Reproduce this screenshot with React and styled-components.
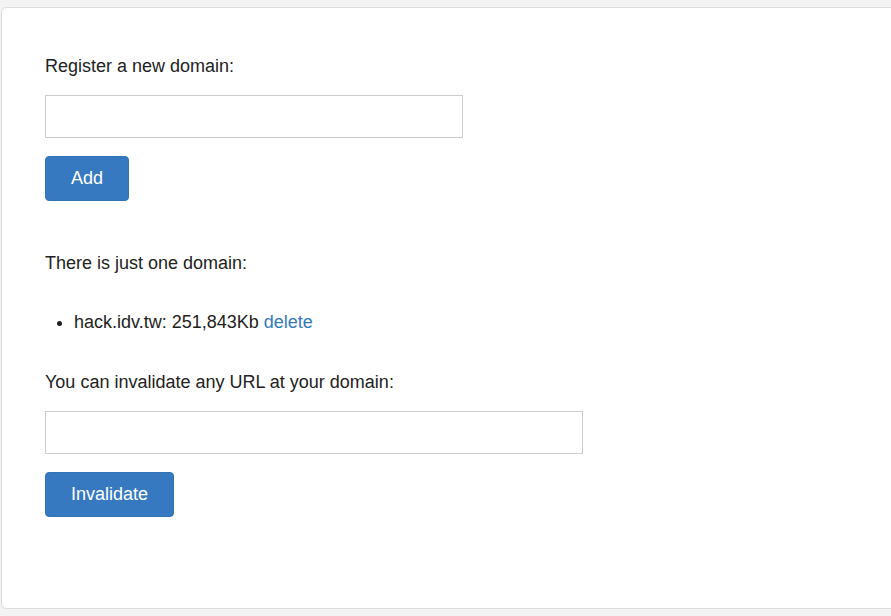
import React, { useState } from 'react';
import styled, { createGlobalStyle } from 'styled-components';

const GlobalStyle = createGlobalStyle`
  html, body {
    margin: 0;
    padding: 0;
    background: #f3f3f3;
  }
  body {
    font-family: "Liberation Sans", Arial, sans-serif;
    font-size: 18px;
    line-height: 25px;
    color: #222;
  }
`;

export default function App() {
  const [domain, setDomain] = useState('');
  const [url, setUrl] = useState('');
  const domains = [{ name: 'hack.idv.tw', size: '251,843Kb' }];

  return (
    <Styled.Page>
      <GlobalStyle />
      <Styled.Panel>
        <Styled.Label>Register a new domain:</Styled.Label>
        <Styled.Input width={418} value={domain} onChange={e => setDomain(e.target.value)} />
        <Styled.Button>Add</Styled.Button>

        <Styled.Label spaced>There is just one domain:</Styled.Label>
        <Styled.DomainList>
          {domains.map(item => (
            <li key={item.name}>
              {item.name}: {item.size} <a href="#">delete</a>
            </li>
          ))}
        </Styled.DomainList>

        <Styled.Label>You can invalidate any URL at your domain:</Styled.Label>
        <Styled.Input width={538} value={url} onChange={e => setUrl(e.target.value)} />
        <Styled.Button>Invalidate</Styled.Button>
      </Styled.Panel>
    </Styled.Page>
  );
}

const Styled = {
  Page: styled.div`
    padding: 7px 0 0 1px;
    overflow: hidden;
    height: 616px;
    box-sizing: border-box;
  `,
  Panel: styled.div`
    width: 920px;
    height: 602px;
    box-sizing: border-box;
    background: #fff;
    border: 1px solid #dcdcdc;
    border-radius: 5px;
    padding: 46px 43px 0;
  `,
  Label: styled.p`
    margin: ${p => (p.spaced ? '50px' : '0')} 0 16px;
    line-height: 25px;
  `,
  Input: styled.input.attrs({ type: 'text' })`
    display: block;
    width: ${p => p.width}px;
    height: 43px;
    box-sizing: border-box;
    border: 1px solid #ccc;
    border-radius: 0;
    padding: 6px 12px;
    font: inherit;
    margin: 0 0 18px;
    outline: none;
  `,
  Button: styled.button`
    display: block;
    height: 45px;
    padding: 0 25px;
    background: #3679c0;
    color: #fff;
    border: 1px solid #3273b6;
    border-radius: 4px;
    font-family: "Liberation Sans", Arial, sans-serif;
    font-size: 18px;
    cursor: pointer;
  `,
  DomainList: styled.ul`
    margin: 34px 0 35px;
    padding-left: 29px;
    line-height: 25px;
    a {
      color: #337ab7;
      text-decoration: none;
    }
  `,
};
